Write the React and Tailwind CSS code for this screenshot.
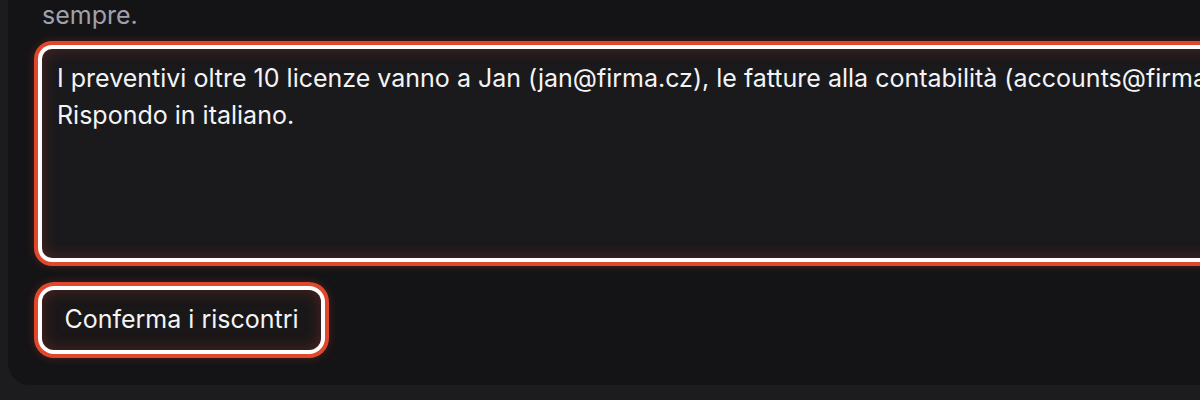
import React from "react";

const ring =
  "shadow-[0_0_0_4px_#ffffff,0_0_0_8px_#e0482e,0_0_10px_8px_rgba(224,72,46,0.25),inset_0_0_16px_rgba(224,72,46,0.28)]";

export default function App() {
  return (
    <div
      className="w-[1200px] h-[400px] overflow-hidden bg-[#1c1c1f]"
      style={{ fontFamily: "Inter, 'Noto Sans', sans-serif" }}
    >
      <div className="ml-[8px] w-[1400px] rounded-bl-[22px] bg-[#141416] pl-[34px] pb-[35px]">
        <p className="text-[25px] leading-[30px] text-[#a1a1aa]">sempre.</p>

        <textarea
          readOnly
          defaultValue={
            "I preventivi oltre 10 licenze vanno a Jan (jan@firma.cz), le fatture alla contabilità (accounts@firma.cz).\nRispondo in italiano."
          }
          className={`mt-[19px] block h-[209px] w-[1300px] resize-none overflow-hidden whitespace-pre rounded-[10px] bg-[#1a191c] px-[15px] py-[11px] text-[25px] leading-[37px] text-[#f4f4f5] outline-none ${ring}`}
        />

        <button
          className={`mt-[32px] flex h-[60px] w-[279px] items-center justify-center rounded-[12px] bg-[#1a1719] text-[25px] font-normal text-[#f4f4f5] ${ring}`}
        >
          Conferma i riscontri
        </button>
      </div>
    </div>
  );
}
